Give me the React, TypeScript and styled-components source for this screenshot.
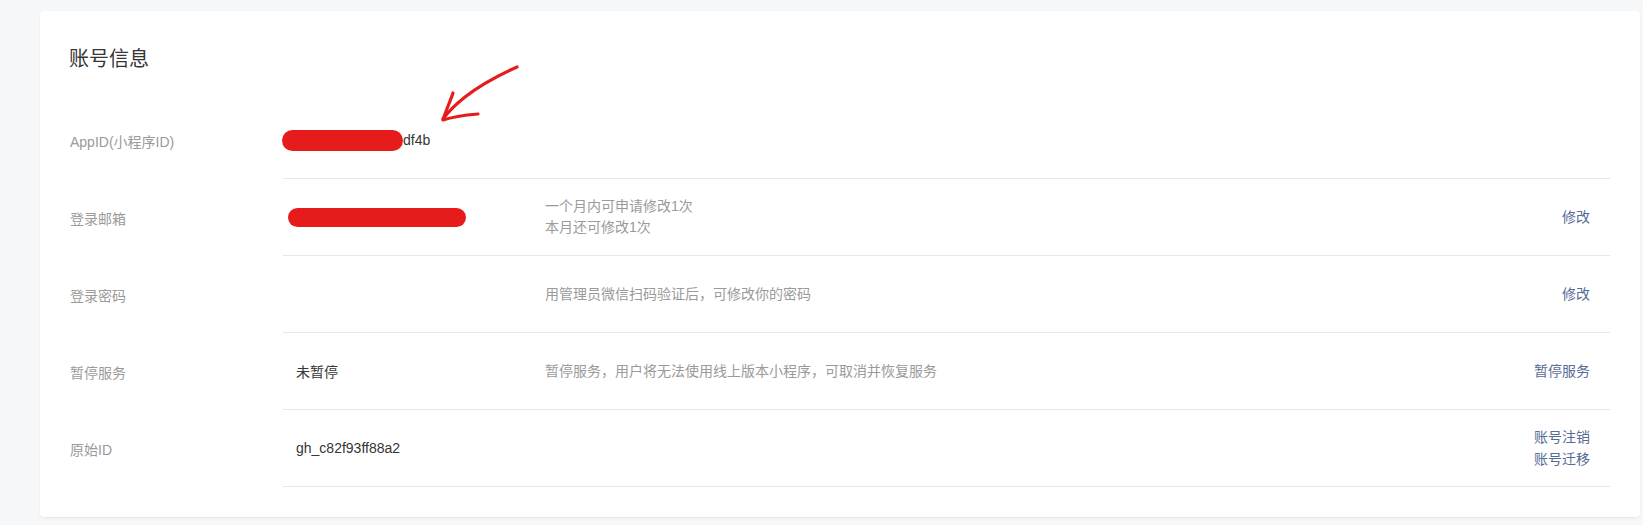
import styled, { createGlobalStyle } from 'styled-components';

const GlobalStyle = createGlobalStyle`
  html, body {
    margin: 0;
    padding: 0;
    background: #f6f7f9;
  }
  body {
    font-family: 'Liberation Sans', 'Noto Sans CJK SC', sans-serif;
    font-size: 14px;
    color: #353535;
  }
`;

interface IRow {
  label: string;
  value?: React.ReactNode;
  desc?: string[];
  actions?: string[];
}

const Redaction = ({ w, h, shift }: { w: number; h: number; shift: number }) => (
  <Blob $w={w} $h={h} $shift={shift} />
);

const rows: IRow[] = [
  {
    label: 'AppID(小程序ID)',
    value: (
      <>
        <Redaction w={121} h={21} shift={-14} />
        df4b
      </>
    ),
  },
  {
    label: '登录邮箱',
    value: <Redaction w={178} h={19} shift={-8} />,
    desc: ['一个月内可申请修改1次', '本月还可修改1次'],
    actions: ['修改'],
  },
  {
    label: '登录密码',
    desc: ['用管理员微信扫码验证后，可修改你的密码'],
    actions: ['修改'],
  },
  {
    label: '暂停服务',
    value: '未暂停',
    desc: ['暂停服务，用户将无法使用线上版本小程序，可取消并恢复服务'],
    actions: ['暂停服务'],
  },
  {
    label: '原始ID',
    value: 'gh_c82f93ff88a2',
    actions: ['账号注销', '账号迁移'],
  },
];

const App = () => {
  return (
    <Page>
      <GlobalStyle />
      <Card>
        <Title>账号信息</Title>
        <List>
          {rows.map(row => (
            <Row key={row.label}>
              <Label>{row.label}</Label>
              <Content>
                <Value>{row.value}</Value>
                <Desc>
                  {row.desc?.map(line => (
                    <div key={line}>{line}</div>
                  ))}
                </Desc>
                <Actions>
                  {row.actions?.map(a => (
                    <Link key={a} href='#'>
                      {a}
                    </Link>
                  ))}
                </Actions>
              </Content>
            </Row>
          ))}
        </List>
        {/* hand-drawn annotation arrow */}
        <Arrow width='100' height='70' viewBox='0 0 100 70'>
          <path
            d='M88 3 C 70 11, 50 22, 36 33 C 26 41, 19 48, 14 55'
            fill='none'
            stroke='#e61c1c'
            strokeWidth='3.2'
            strokeLinecap='round'
          />
          <path
            d='M24 29 C 21 38, 17 46, 14 56 C 26 52, 37 51, 49 50'
            fill='none'
            stroke='#e61c1c'
            strokeWidth='3.2'
            strokeLinecap='round'
            strokeLinejoin='round'
          />
        </Arrow>
      </Card>
    </Page>
  );
};
export default App;

const Page = styled.div`
  padding: 11px 3px 8px 40px;
  min-height: 525px;
  box-sizing: border-box;
`;

const Card = styled.div`
  position: relative;
  background: #fff;
  border-radius: 4px;
  box-shadow: 0 1px 2px rgba(0, 0, 0, 0.08);
  padding: 33px 30px 30px 29px;
`;

const Title = styled.h2`
  margin: 0 0 30px;
  font-family: 'Noto Sans CJK SC', sans-serif;
  font-size: 20px;
  font-weight: 400;
  line-height: 28px;
  color: #353535;
`;

const List = styled.div`
  display: flex;
  flex-direction: column;
`;

const Row = styled.div`
  display: grid;
  grid-template-columns: 214px 1fr;
  align-items: stretch;
`;

const Label = styled.div`
  display: flex;
  align-items: center;
  color: #9a9a9a;
  padding-left: 1px;
`;

const Content = styled.div`
  display: flex;
  align-items: center;
  min-height: 76px;
  border-bottom: 1px solid #e7e7eb;
`;

const Value = styled.div`
  width: 262px;
  box-sizing: border-box;
  padding-left: 13px;
  display: flex;
  align-items: center;
  color: #353535;
`;

const Desc = styled.div`
  flex: 1;
  color: #9a9a9a;
  line-height: 21px;
`;

const Actions = styled.div`
  display: flex;
  flex-direction: column;
  align-items: flex-end;
  padding-right: 20px;
  line-height: 22px;
`;

const Link = styled.a`
  color: #576b95;
  text-decoration: none;
`;

const Blob = styled.span<{ $w: number; $h: number; $shift: number }>`
  display: inline-block;
  width: ${p => p.$w}px;
  height: ${p => p.$h}px;
  margin-left: ${p => p.$shift}px;
  background: #e61c1c;
  border-radius: ${p => p.$h / 2}px;
`;

const Arrow = styled.svg`
  position: absolute;
  left: 389px;
  top: 53px;
`;
